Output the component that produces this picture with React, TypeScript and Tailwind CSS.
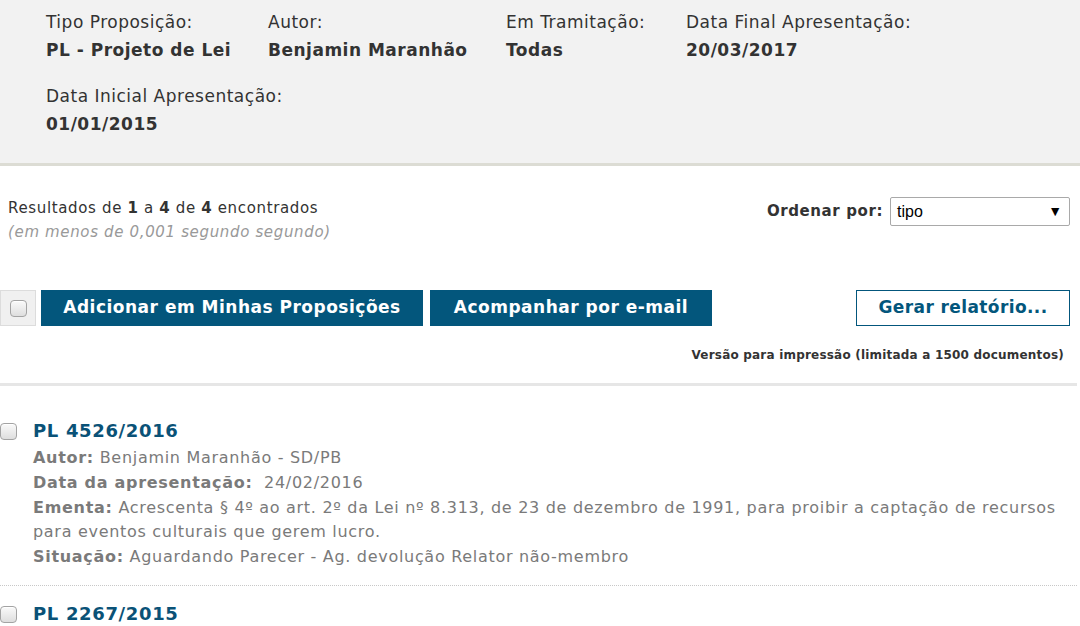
const font = { fontFamily: '"DejaVu Sans", Verdana, sans-serif' };

type Filter = { label: string; value: string; width?: string };

const filters: Filter[][] = [
  [
    { label: 'Tipo Proposição:', value: 'PL - Projeto de Lei', width: 'w-[222px]' },
    { label: 'Autor:', value: 'Benjamin Maranhão', width: 'w-[238px]' },
    { label: 'Em Tramitação:', value: 'Todas', width: 'w-[180px]' },
    { label: 'Data Final Apresentação:', value: '20/03/2017' },
  ],
  [{ label: 'Data Inicial Apresentação:', value: '01/01/2015' }],
];

const Checkbox = () => (
  <span className="inline-block w-[17px] h-[17px] rounded-[4px] border border-[#a3a3a3] bg-gradient-to-b from-[#fafafa] to-[#dedede] shadow-[inset_0_1px_0_#fff]" />
);

const App = () => {
  return (
    <div className="w-[1080px] h-[626px] overflow-hidden bg-white text-[#333]" style={font}>
      <div className="bg-[#f2f2f2] border-b-[3px] border-[#dcdcd4] pl-[46px] pt-[8px] pb-[25px] flex flex-col gap-[18px]">
        {filters.map((row, i) => (
          <div key={i} className="flex">
            {row.map(f => (
              <div key={f.label} className={f.width}>
                <div className="text-[17px] leading-[28px] tracking-[0.5px]">{f.label}</div>
                <div className="text-[17px] leading-[28px] tracking-[0.5px] font-bold">{f.value}</div>
              </div>
            ))}
          </div>
        ))}
      </div>

      <div className="w-[1077px]">
        <div className="flex justify-between items-start pl-[8px] pr-[7px] pt-[30px]">
          <div className="text-[15px] tracking-[0.65px]">
            <div className="leading-[24px]">
              Resultados de <b>1</b> a <b>4</b> de <b>4</b> encontrados
            </div>
            <div className="leading-[24px] italic text-[#999]">(em menos de 0,001 segundo segundo)</div>
          </div>
          <div className="flex items-center gap-[7px] pt-[1px]">
            <span className="text-[15px] font-bold tracking-[0.6px]">Ordenar por:</span>
            <div
              className="w-[180px] h-[29px] border border-[#a9a9a9] rounded-[2px] flex items-center justify-between pl-[6px] pr-[7px] text-[16px] text-black"
              style={{ fontFamily: '"Liberation Sans", Arial, sans-serif' }}
            >
              <span>tipo</span>
              <span className="text-[14px]">▼</span>
            </div>
          </div>
        </div>

        <div className="flex items-center mt-[46px] pr-[7px]">
          <div className="w-[36px] h-[36px] bg-[#f0f0f0] border border-[#dcdcdc] flex items-center justify-center">
            <Checkbox />
          </div>
          <button className="ml-[5px] w-[382px] h-[36px] bg-[#03567c] text-white text-[17px] tracking-[0.5px] font-bold">
            Adicionar em Minhas Proposições
          </button>
          <button className="ml-[7px] w-[282px] h-[36px] bg-[#03567c] text-white text-[17px] tracking-[0.5px] font-bold">
            Acompanhar por e-mail
          </button>
          <button className="ml-auto w-[214px] h-[36px] bg-white border border-[#03567c] text-[#03567c] text-[17px] tracking-[0.4px] font-bold">
            Gerar relatório...
          </button>
        </div>

        <div className="text-right text-[12px] tracking-[0.2px] font-bold pr-[13px] mt-[19px] leading-[20px]">
          Versão para impressão (limitada a 1500 documentos)
        </div>

        <div className="mt-[18px] h-[3px] bg-[#e6e6e6]" />

        <div className="pt-[32px]">
          <div className="flex border-b border-dotted border-[#c8c8c8] pb-[15px]">
            <div className="w-[33px] shrink-0 pt-[5px]">
              <Checkbox />
            </div>
            <div className="flex-1">
              <div className="text-[18px] font-bold tracking-[0.65px] text-[#0a5277] leading-[26px]">PL 4526/2016</div>
              <div className="text-[16px] leading-[24.8px] tracking-[0.7px] text-[#7a7a7a] mt-[2px]">
                <div>
                  <b>Autor:</b> Benjamin Maranhão - SD/PB
                </div>
                <div>
                  <b>Data da apresentação:</b>&nbsp; 24/02/2016
                </div>
                <div>
                  <b>Ementa:</b> Acrescenta § 4º ao art. 2º da Lei nº 8.313, de 23 de dezembro de 1991, para proibir a captação de recursos para eventos culturais que gerem lucro.
                </div>
                <div>
                  <b>Situação:</b> Aguardando Parecer - Ag. devolução Relator não-membro
                </div>
              </div>
            </div>
          </div>

          <div className="flex pt-[15px]">
            <div className="w-[33px] shrink-0 pt-[5px]">
              <Checkbox />
            </div>
            <div className="text-[18px] font-bold tracking-[0.65px] text-[#0a5277] leading-[26px]">PL 2267/2015</div>
          </div>
        </div>
      </div>
    </div>
  );
};

export default App;
